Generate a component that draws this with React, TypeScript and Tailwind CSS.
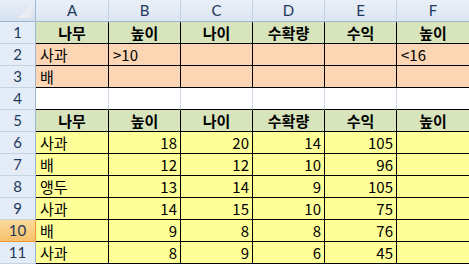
import React from 'react';

const COLS = ['A', 'B', 'C', 'D', 'E', 'F'];

type Row = {
  n: number;
  cells: (string | number)[];
  kind: 'head' | 'crit' | 'blank' | 'data';
  active?: boolean;
};

const ROWS: Row[] = [
  { n: 1, kind: 'head', cells: ['나무', '높이', '나이', '수확량', '수익', '높이'] },
  { n: 2, kind: 'crit', cells: ['사과', '>10', '', '', '', '<16'] },
  { n: 3, kind: 'crit', cells: ['배', '', '', '', '', ''] },
  { n: 4, kind: 'blank', cells: ['', '', '', '', '', ''] },
  { n: 5, kind: 'head', cells: ['나무', '높이', '나이', '수확량', '수익', '높이'] },
  { n: 6, kind: 'data', cells: ['사과', 18, 20, 14, 105, ''] },
  { n: 7, kind: 'data', cells: ['배', 12, 12, 10, 96, ''] },
  { n: 8, kind: 'data', cells: ['앵두', 13, 14, 9, 105, ''] },
  { n: 9, kind: 'data', cells: ['사과', 14, 15, 10, 75, ''] },
  { n: 10, kind: 'data', cells: ['배', 9, 8, 8, 76, ''], active: true },
  { n: 11, kind: 'data', cells: ['사과', 8, 9, 6, 45, ''] },
];

const cellFont = { fontFamily: '"Malgun Gothic", "Noto Sans CJK KR", sans-serif' };
const headFont = { fontFamily: 'Lato, "Open Sans", sans-serif' };

function Cell({ row, value }: { row: Row; value: string | number }) {
  const bg =
    row.kind === 'head'
      ? 'bg-[#d8e4bc] font-bold justify-center'
      : row.kind === 'crit'
        ? 'bg-[#fcd5b4]'
        : row.kind === 'blank'
          ? 'bg-white'
          : 'bg-[#ffff99]';
  const right = row.kind === 'blank' ? 'border-r-[#d0d7e5]' : 'border-r-black';
  const align = typeof value === 'number' ? 'justify-end pr-[3px]' : 'pl-[4px]';
  return (
    <div
      className={`flex items-center h-[22px] border-r border-b border-b-black text-[15px] leading-none text-black ${right} ${bg} ${row.kind === 'head' ? '' : align}`}
      style={cellFont}
    >
      {value}
    </div>
  );
}

export default function App() {
  return (
    <div className="w-[469px] h-[266px] overflow-hidden bg-white">
      <div className="grid grid-cols-[36px_73px_72px_72px_72px_72px_73px]">
        {/* corner */}
        <div className="relative h-[22px] bg-gradient-to-b from-[#e8eef7] to-[#d6e1f0] border-r border-b border-[#9eb6ce]">
          <svg className="absolute right-[3px] bottom-[3px]" width="14" height="13" viewBox="0 0 14 13">
            <defs>
              <linearGradient id="tri" x1="0" y1="0" x2="1" y2="1">
                <stop offset="0" stopColor="#ffffff" />
                <stop offset="1" stopColor="#dfe3e8" />
              </linearGradient>
            </defs>
            <polygon points="14,0 14,13 0,13" fill="url(#tri)" />
          </svg>
        </div>
        {COLS.map((c) => (
          <div
            key={c}
            className="flex items-center justify-center h-[22px] bg-gradient-to-b from-[#eaf0f8] to-[#dbe5f2] border-r border-r-[#c5d2e2] border-b border-b-[#9eb6ce] text-[15px] text-[#1e395b]"
            style={headFont}
          >
            {c}
          </div>
        ))}

        {ROWS.map((row) => (
          <React.Fragment key={row.n}>
            <div
              className={`flex items-center justify-center h-[22px] border-r border-b text-[15px] ${
                row.active
                  ? 'bg-gradient-to-b from-[#fbd99a] to-[#f6c16a] border-[#f29536] text-[#1e395b]'
                  : 'bg-[#e4ecf7] border-r-[#9eb6ce] border-b-[#c5d2e2] text-[#1e395b]'
              }`}
              style={headFont}
            >
              {row.n}
            </div>
            {row.cells.map((v, i) => (
              <Cell key={i} row={row} value={v} />
            ))}
          </React.Fragment>
        ))}
      </div>
    </div>
  );
}
